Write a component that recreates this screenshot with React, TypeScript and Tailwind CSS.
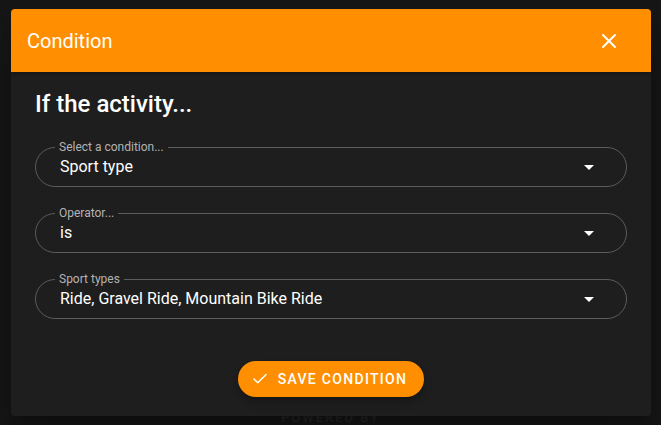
import { Check, X } from "lucide-react";

const fields = [
  { label: "Select a condition...", value: "Sport type" },
  { label: "Operator...", value: "is" },
  { label: "Sport types", value: "Ride, Gravel Ride, Mountain Bike Ride" },
];

function ArrowDropDown() {
  return (
    <svg width="24" height="24" viewBox="0 0 24 24" className="fill-white">
      <path d="M7 10l5 5 5-5z" />
    </svg>
  );
}

export default function App() {
  return (
    <div className="relative h-[425px] w-[661px] overflow-hidden bg-[#161616] font-['Roboto',sans-serif]">
      {/* Backdrop page (dimmed) */}
      <div className="flex h-full flex-col justify-end text-[#262626]">
        <div className="text-center text-[13px] font-medium tracking-[2px] leading-[14px]">POWERED BY</div>
      </div>

      {/* Dialog */}
      <div className="absolute left-[11px] top-[9px] flex h-[407px] w-[640px] flex-col overflow-hidden rounded bg-[#1e1e1e] shadow-[0_11px_15px_-7px_rgba(0,0,0,0.3),0_24px_38px_3px_rgba(0,0,0,0.2)]">
        <div className="flex h-[63px] items-center justify-between bg-[#ff8f00] pl-4 pr-[30px] shadow-[0_2px_4px_rgba(0,0,0,0.3)]">
          <span className="text-[20px] text-white">Condition</span>
          <X className="h-6 w-6 text-white" strokeWidth={2} />
        </div>

        <div className="flex flex-1 flex-col px-6 pt-4">
          <h2 className="text-[24px] font-medium leading-8 text-white">If the activity...</h2>

          <div className="mt-[27px] flex flex-col gap-[26px]">
            {fields.map((f) => (
              <div
                key={f.label}
                className="relative flex h-10 items-center justify-between rounded-full border border-[#5c5c5c] pl-6 pr-[25px]"
              >
                <span className="absolute -top-[8px] left-[19px] bg-[#1e1e1e] px-[4px] text-[12px] leading-[14px] text-[#b3b3b3]">
                  {f.label}
                </span>
                <span className="text-[16px] text-white">{f.value}</span>
                <ArrowDropDown />
              </div>
            ))}
          </div>

          <div className="mt-[42px] flex justify-center">
            <button className="flex h-9 w-[186px] items-center justify-center gap-[9px] rounded-full bg-[#ff8f00] pr-1 text-[14px] font-medium uppercase tracking-[1.3px] text-white shadow-[0_3px_5px_-1px_rgba(0,0,0,0.2),0_6px_10px_0_rgba(0,0,0,0.14)]">
              <Check className="h-[18px] w-[18px]" strokeWidth={2} />
              Save Condition
            </button>
          </div>
        </div>
      </div>
    </div>
  );
}
